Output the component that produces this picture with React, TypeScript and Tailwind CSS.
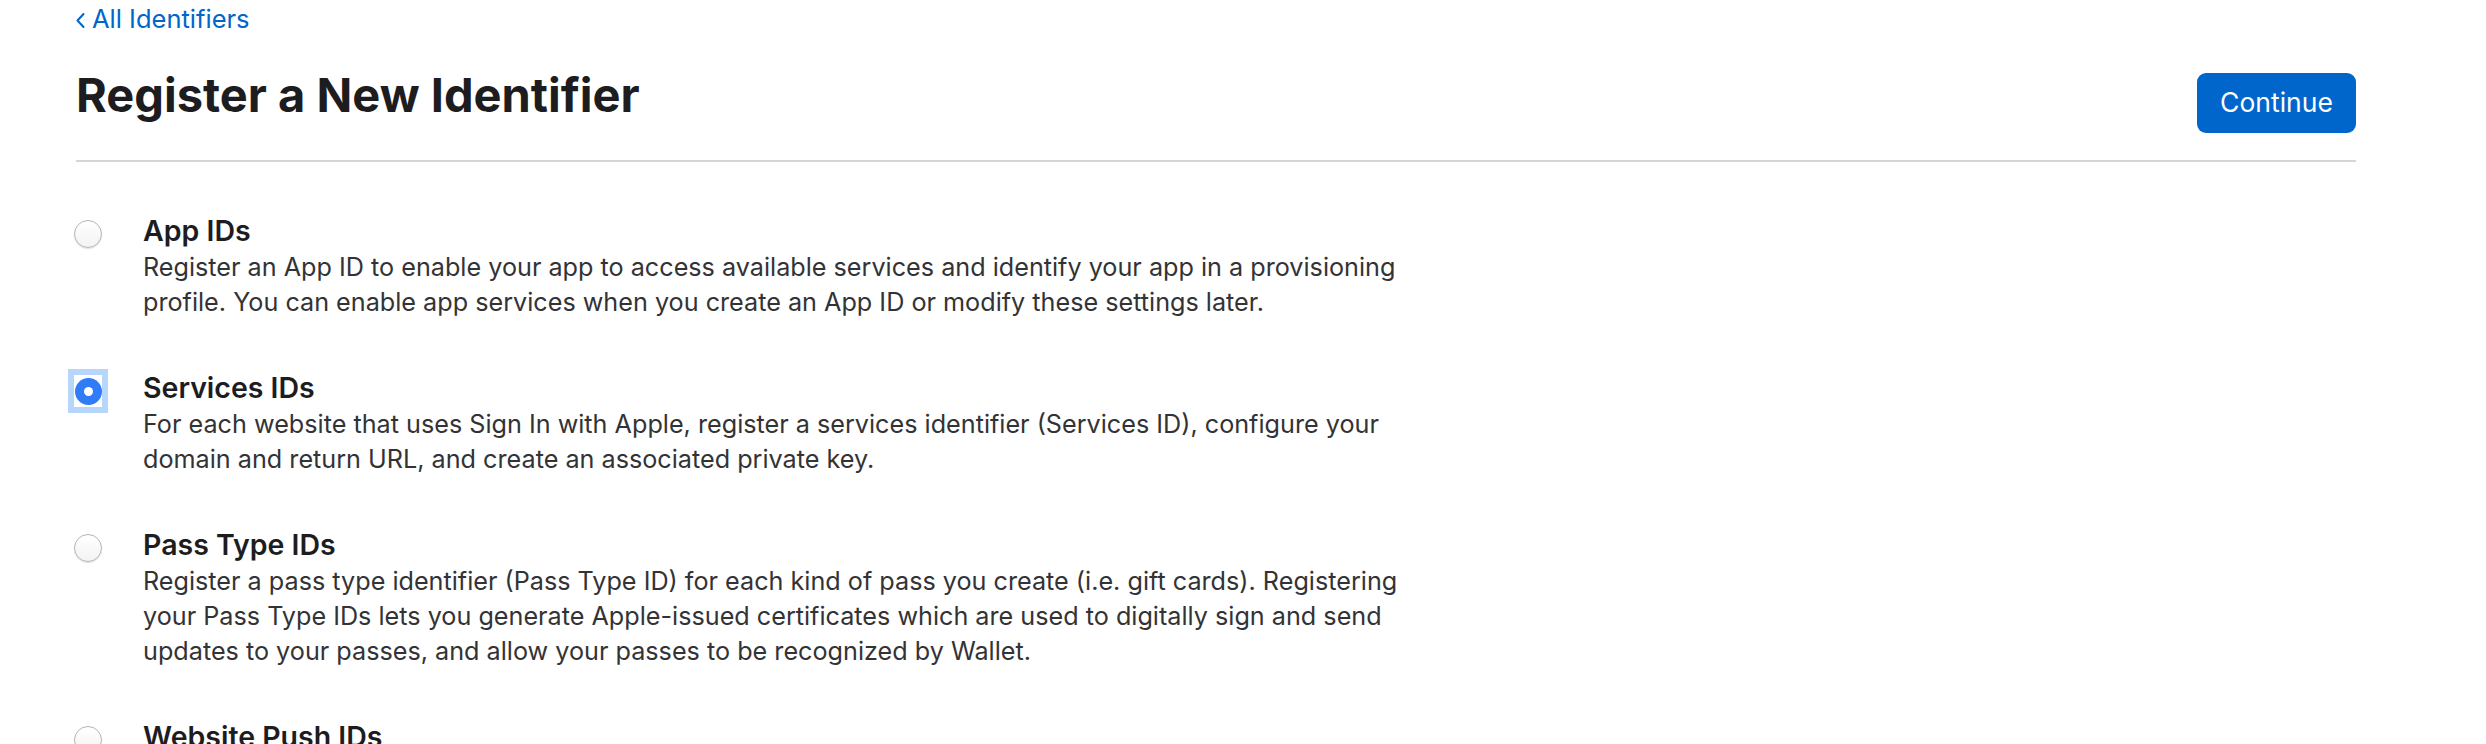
import React from "react";

type Item = { title: string; lines: string[]; selected?: boolean };

const items: Item[] = [
  {
    title: "App IDs",
    lines: [
      "Register an App ID to enable your app to access available services and identify your app in a provisioning",
      "profile. You can enable app services when you create an App ID or modify these settings later.",
    ],
  },
  {
    title: "Services IDs",
    selected: true,
    lines: [
      "For each website that uses Sign In with Apple, register a services identifier (Services ID), configure your",
      "domain and return URL, and create an associated private key.",
    ],
  },
  {
    title: "Pass Type IDs",
    lines: [
      "Register a pass type identifier (Pass Type ID) for each kind of pass you create (i.e. gift cards). Registering",
      "your Pass Type IDs lets you generate Apple-issued certificates which are used to digitally sign and send",
      "updates to your passes, and allow your passes to be recognized by Wallet.",
    ],
  },
  {
    title: "Website Push IDs",
    lines: [
      "Register a Website Push ID to send push notifications from your website to macOS users.",
    ],
  },
];

function Radio({ selected }: { selected?: boolean }) {
  if (selected) {
    return (
      <div className="w-[28px] h-[32px] bg-white ring-[6px] ring-[#b6d6fb] flex items-center justify-center">
        <div className="w-[27px] h-[27px] rounded-full bg-[#2f7cf6] flex items-center justify-center">
          <div className="w-[9px] h-[9px] rounded-full bg-white" />
        </div>
      </div>
    );
  }
  return (
    <div className="w-[28px] h-[32px] flex items-center justify-center">
      <div className="w-[28px] h-[28px] rounded-full border border-[#b4b4b4] bg-gradient-to-b from-white to-[#f3f3f3] shadow-[0_1px_1px_rgba(0,0,0,0.12)]" />
    </div>
  );
}

export default function App() {
  return (
    <div
      className="w-full h-[744px] overflow-hidden bg-white text-[#1d1d1f]"
      style={{ fontFamily: "Inter, 'Noto Sans', sans-serif" }}
    >
      <div className="pl-[76px] w-[2356px]">
        <a className="h-[38px] flex items-center gap-[7px] text-[25.5px] text-[#0066cc]">
          <svg width="9" height="15" viewBox="0 0 9 15" className="mt-[3px]">
            <polyline
              points="7.5,1 1.5,7.5 7.5,14"
              fill="none"
              stroke="#0066cc"
              strokeWidth="2"
              strokeLinecap="round"
              strokeLinejoin="round"
            />
          </svg>
          <span>All Identifiers</span>
        </a>
        <div className="flex justify-between items-start pt-[30px] h-[122px]">
          <h1 className="text-[47px] leading-[54px] font-bold text-[#1d1d1f]">
            Register a New Identifier
          </h1>
          <button className="mt-[5px] h-[60px] w-[159px] rounded-[9px] bg-[#0066cc] text-white text-[26.5px]">
            Continue
          </button>
        </div>
        <div className="h-[2px] bg-[#d6d6d6]" />
        <div className="pt-[50px] flex flex-col gap-[49px]">
          {items.map((it) => (
            <div key={it.title} className="flex">
              <div className="w-[67px] shrink-0 pt-[6px] -ml-[2px] mr-[2px]">
                <Radio selected={it.selected} />
              </div>
              <div>
                <div className="text-[28.5px] leading-[38px] font-semibold text-[#1d1d1f]">
                  {it.title}
                </div>
                <div className="text-[25.2px] leading-[35px] text-[#333336]">
                  {it.lines.map((l) => (
                    <div key={l} className="whitespace-nowrap">
                      {l}
                    </div>
                  ))}
                </div>
              </div>
            </div>
          ))}
        </div>
      </div>
    </div>
  );
}
